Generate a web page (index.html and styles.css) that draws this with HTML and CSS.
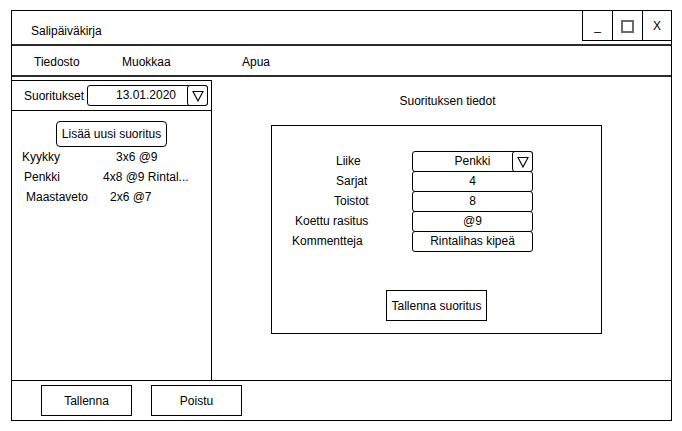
FILE: index.html
```html
<!DOCTYPE html>
<html lang="fi">
<head>
<meta charset="utf-8">
<title>Salipäiväkirja</title>
<link rel="stylesheet" href="styles.css">
</head>
<body>
<div class="window">
  <header class="titlebar">
    <div class="title">Salipäiväkirja</div>
    <div class="winbtns">
      <div class="wbtn">_</div>
      <div class="wbtn"><span class="sq"></span></div>
      <div class="wbtn">X</div>
    </div>
  </header>
  <nav class="menubar">
    <span>Tiedosto</span>
    <span>Muokkaa</span>
    <span>Apua</span>
  </nav>
  <div class="main">
    <aside class="left">
      <div class="lhead">
        <span class="lhead-label">Suoritukset</span>
        <div class="datebox">
          <span class="datetext">13.01.2020</span>
          <span class="drop"><svg width="12" height="12" viewBox="0 0 12 12"><path d="M1 1.5 H11 L6 11 Z" fill="none" stroke="#000" stroke-width="1.1" stroke-linejoin="miter"/></svg></span>
        </div>
      </div>
      <div class="lbody">
        <button class="addbtn">Lisää uusi suoritus</button>
        <ul class="list">
          <li class="row r1"><span class="name">Kyykky</span><span>3x6 @9</span></li>
          <li class="row r2"><span class="name">Penkki</span><span>4x8 @9 Rintal...</span></li>
          <li class="row r3"><span class="name">Maastaveto</span><span>2x6 @7</span></li>
        </ul>
      </div>
    </aside>
    <section class="right">
      <div class="rtitle">Suorituksen tiedot</div>
      <div class="formbox">
        <div class="form">
          <div class="frow"><span class="lbl l1">Liike</span><div class="field">Penkki<span class="drop"><svg width="12" height="12" viewBox="0 0 12 12"><path d="M1 1.5 H11 L6 11 Z" fill="none" stroke="#000" stroke-width="1.1"/></svg></span></div></div>
          <div class="frow"><span class="lbl l2">Sarjat</span><div class="field">4</div></div>
          <div class="frow"><span class="lbl l3">Toistot</span><div class="field">8</div></div>
          <div class="frow"><span class="lbl l4">Koettu rasitus</span><div class="field">@9</div></div>
          <div class="frow"><span class="lbl l5">Kommentteja</span><div class="field">Rintalihas kipeä</div></div>
        </div>
        <button class="savebtn">Tallenna suoritus</button>
      </div>
    </section>
  </div>
  <footer class="bottombar">
    <button class="bbtn">Tallenna</button>
    <button class="bbtn">Poistu</button>
  </footer>
</div>
</body>
</html>
```

FILE: styles.css
```css
* { box-sizing: border-box; }

html, body {
  margin: 0;
  padding: 0;
  background: #fff;
}

body {
  font-family: "Liberation Sans", Arial, sans-serif;
  font-size: 12px;
  line-height: 14px;
  color: #000;
}

button {
  font: inherit;
  color: #000;
  background: #fff;
  border: 1px solid #000;
  padding: 0;
  margin: 0;
}

.window {
  margin: 10px 0 0 11px;
  width: 661px;
  height: 411px;
  border: 1px solid #000;
  display: flex;
  flex-direction: column;
}

.titlebar {
  height: 35px;
  flex: none;
  display: flex;
  justify-content: space-between;
  align-items: flex-start;
  border-bottom: 2px solid #2b2b2b;
}

.title {
  padding: 13px 0 0 19px;
}

.winbtns {
  display: flex;
  height: 30px;
}

.wbtn {
  width: 30px;
  height: 30px;
  border-left: 1px solid #000;
  border-bottom: 1px solid #000;
  display: flex;
  align-items: center;
  justify-content: center;
}

.wbtn:last-child { width: 29px; }

.sq {
  width: 13px;
  height: 13px;
  border: 2px solid #6a6a6a;
  margin-top: 2px;
}

.menubar {
  height: 31px;
  flex: none;
  border-bottom: 2px solid #2b2b2b;
  padding: 9px 0 0 22px;
  display: grid;
  grid-template-columns: 88px 120px auto;
  align-content: start;
}

.main {
  flex: 1;
  display: flex;
  padding-top: 3px;
}

.left {
  width: 200px;
  flex: none;
  border-top: 1px solid #000;
  border-right: 1px solid #000;
  display: flex;
  flex-direction: column;
}

.lhead {
  height: 30px;
  flex: none;
  border-bottom: 1px solid #000;
  display: flex;
  align-items: center;
  padding-left: 12px;
}

.datebox {
  margin-left: auto;
  margin-right: 3px;
  width: 121px;
  height: 21px;
  border: 1px solid #000;
  border-radius: 3px;
  position: relative;
  text-align: center;
  line-height: 19px;
  padding-right: 3px;
}

.drop {
  position: absolute;
  top: -1px;
  right: -1px;
  width: 21px;
  height: 21px;
  border: 1px solid #000;
  border-radius: 3px;
  background: #fff;
  display: flex;
  align-items: center;
  justify-content: center;
}

.drop svg { display: block; margin-top: 1px; }

.lbody {
  display: flex;
  flex-direction: column;
  align-items: center;
  padding-top: 10px;
}

.addbtn {
  width: 111px;
  height: 26px;
  border-radius: 4px;
}

.list {
  list-style: none;
  margin: 0;
  padding: 0;
  align-self: stretch;
}

.row {
  display: flex;
  height: 20px;
  line-height: 20px;
}

.r1 .name { padding-left: 10px; width: 104px; }
.r2 .name { padding-left: 12px; width: 91px; }
.r3 .name { padding-left: 14px; width: 98px; }

.right {
  flex: 1;
  display: flex;
  flex-direction: column;
  align-items: flex-start;
}

.rtitle {
  align-self: stretch;
  text-align: center;
  padding: 14px 0 0 12px;
}

.formbox {
  margin: 17px 0 0 59px;
  width: 331px;
  height: 209px;
  border: 1px solid #000;
  display: flex;
  flex-direction: column;
  align-items: center;
}

.form {
  align-self: stretch;
  margin-top: 25px;
  display: flex;
  flex-direction: column;
}

.frow {
  height: 20px;
  display: flex;
  align-items: flex-start;
}

.lbl {
  width: 140px;
  line-height: 21px;
}

.l1 { padding-left: 64px; }
.l2 { padding-left: 64px; }
.l3 { padding-left: 62px; }
.l4 { padding-left: 23px; }
.l5 { padding-left: 20px; }

.field {
  width: 121px;
  height: 21px;
  flex: none;
  border: 1px solid #000;
  border-radius: 3px;
  background: #fff;
  text-align: center;
  line-height: 19px;
  position: relative;
}

.savebtn {
  margin-top: 39px;
  width: 101px;
  height: 31px;
}

.bottombar {
  height: 40px;
  flex: none;
  border-top: 1px solid #000;
  display: flex;
  align-items: flex-start;
  gap: 19px;
  padding: 4px 0 0 29px;
}

.bbtn {
  width: 91px;
  height: 31px;
}
```
